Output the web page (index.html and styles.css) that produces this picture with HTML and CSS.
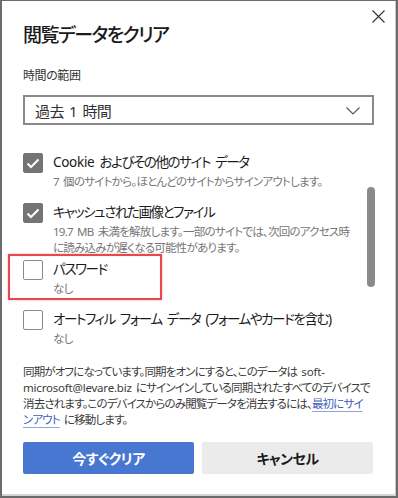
FILE: index.html
```html
<!DOCTYPE html>
<html lang="ja">
<head>
  <meta charset="UTF-8" />
  <title>閲覧データをクリア</title>
  <link rel="stylesheet" href="styles.css">
</head>
<body>

  <div class="dialog">
    <!-- close -->
    <button class="close" aria-label="閉じる">
      <svg width="13" height="13" viewBox="0 0 13 13"><path d="M0.5 0.5 L12.5 12.5 M12.5 0.5 L0.5 12.5" stroke="#333" stroke-width="1.1" fill="none"/></svg>
    </button>

    <h1>閲覧データをクリア</h1>

    <div class="range-label">時間の範囲</div>
    <div class="select">
      <span>過去 1 時間</span>
      <svg width="14" height="8" viewBox="0 0 14 8"><path d="M0.5 0.5 L7 7 L13.5 0.5" stroke="#555" stroke-width="1.1" fill="none"/></svg>
    </div>

    <!-- data types -->
    <div class="list">
      <div class="item">
        <span class="box checked"><svg width="14" height="11" viewBox="0 0 14 11"><path d="M1.5 5.5 L5 9 L12.5 1.5" stroke="#fff" stroke-width="2" fill="none"/></svg></span>
        <div class="text">
          <div class="label"><span class="latin">Cookie</span> およびその他のサイト データ</div>
          <div class="sub">7 個のサイトから。ほとんどのサイトからサインアウトします。</div>
        </div>
      </div>
      <div class="item">
        <span class="box checked"><svg width="14" height="11" viewBox="0 0 14 11"><path d="M1.5 5.5 L5 9 L12.5 1.5" stroke="#fff" stroke-width="2" fill="none"/></svg></span>
        <div class="text">
          <div class="label">キャッシュされた画像とファイル</div>
          <div class="sub">19.7 MB 未満を解放します。一部のサイトでは、次回のアクセス時<br>に読み込みが遅くなる可能性があります。</div>
        </div>
      </div>
      <div class="item marked">
        <span class="box"></span>
        <div class="text">
          <div class="label">パスワード</div>
          <div class="sub">なし</div>
        </div>
      </div>
      <div class="item">
        <span class="box"></span>
        <div class="text">
          <div class="label">オートフィル フォーム データ (フォームやカードを含む)</div>
          <div class="sub">なし</div>
        </div>
      </div>
    </div>

    <p class="note">同期がオフになっています。同期をオンにすると、このデータは <span class="latin">soft-</span><br><span class="latin">microsoft@levare.biz</span> にサインインしている同期されたすべてのデバイスで<br>消去されます。このデバイスからのみ閲覧データを消去するには、<a href="#">最初にサイ<br>ンアウト</a> に移動します。</p>

    <div class="actions">
      <button class="btn primary">今すぐクリア</button>
      <button class="btn">キャンセル</button>
    </div>

    <div class="scrollbar"></div>
  </div>

</body>
</html>
```

FILE: styles.css
```css
body {
  margin: 0;
  font-family: "Noto Sans", "Noto Sans CJK JP", sans-serif;
  font-feature-settings: "palt";
  color: #1b1b1b;
  background: #fff;
}
.dialog {
  position: relative;
  width: 398px;
  height: 498px;
  box-sizing: border-box;
  padding: 20px 23px 0 21px;
  border: 2px solid #6b6b6b;
  border-top-width: 1px;
  box-shadow: inset 0 -2px 0 #d4d4d4, inset -1px 0 0 #c8c8c8;
  overflow: hidden;
}
.close {
  position: absolute;
  top: 9px;
  right: 11px;
  padding: 0;
  border: none;
  background: none;
  line-height: 0;
}
h1 {
  margin: 0;
  font-size: 19px;
  line-height: 28px;
  font-weight: 500;
  letter-spacing: -1.5px;
}
.range-label {
  margin-top: 18px;
  font-size: 12px;
  line-height: 18px;
  color: #333;
  letter-spacing: -0.4px;
}
.select {
  margin-top: 10px;
  width: 351px;
  height: 30px;
  box-sizing: border-box;
  border: 2px solid #8a8a8a;
  display: flex;
  align-items: center;
  justify-content: space-between;
  padding: 0 12px 0 10px;
  font-size: 15px;
  color: #333;
  letter-spacing: -0.6px;
  word-spacing: 2px;
}
.select svg {
  margin-top: 1px;
}
.list {
  margin-top: 28px;
  display: flex;
  flex-direction: column;
}
.item {
  position: relative;
  display: flex;
  gap: 10px;
  min-height: 50px;
  box-sizing: border-box;
  padding-bottom: 4px;
}
.item.marked::after {
  content: "";
  position: absolute;
  left: -15px;
  top: -6px;
  width: 154px;
  height: 46px;
  box-sizing: border-box;
  border: 2px solid #e8474f;
  box-shadow: 0 0 2px rgba(232, 71, 79, 0.45), inset 0 0 1px rgba(232, 71, 79, 0.45);
}
.box {
  flex: none;
  width: 20px;
  height: 20px;
  box-sizing: border-box;
  border: 1px solid #8a8a8a;
  border-radius: 2px;
  display: flex;
  align-items: center;
  justify-content: center;
}
.box.checked {
  background: #747474;
  border-color: #747474;
}
.label {
  font-size: 13.5px;
  line-height: 20px;
  margin-top: -1px;
  letter-spacing: -1.4px;
  word-spacing: 3px;
  white-space: nowrap;
}
.label .latin {
  letter-spacing: -0.3px;
}
.sub {
  margin-top: 2px;
  font-size: 11.5px;
  line-height: 16px;
  color: #767676;
  letter-spacing: -0.75px;
  word-spacing: 2px;
  white-space: nowrap;
}
.note {
  margin: 4px 0 0 0;
  font-size: 11.5px;
  line-height: 16px;
  color: #3a3a3a;
  letter-spacing: -0.85px;
  word-spacing: 2px;
  white-space: nowrap;
}
.note .latin {
  letter-spacing: -0.2px;
}
.note a {
  color: #3f60b8;
  text-decoration: underline;
  text-decoration-color: #8fa4dc;
  text-underline-offset: 3px;
}
.actions {
  margin-top: 14px;
  display: flex;
  gap: 8px;
}
.btn {
  width: 172px;
  height: 32px;
  border: none;
  border-radius: 2px;
  background: #ebebeb;
  color: #1b1b1b;
  font-family: inherit;
  font-feature-settings: "palt";
  font-size: 14px;
  font-weight: 700;
  letter-spacing: -0.5px;
}
.btn.primary {
  background: #4777d1;
  color: #fff;
}
.scrollbar {
  position: absolute;
  left: 365px;
  top: 186px;
  width: 8px;
  height: 100px;
  border-radius: 4px;
  background: #8a8a8a;
}
```
